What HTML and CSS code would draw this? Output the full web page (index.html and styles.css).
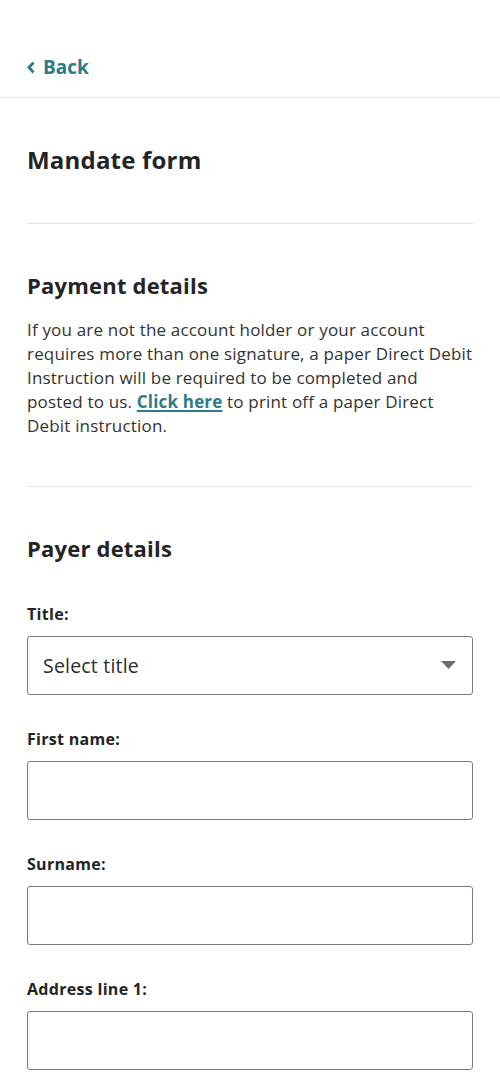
FILE: index.html
```html
<!DOCTYPE html>
<html lang="en">
<head>
<meta charset="utf-8">
<title>Mandate form</title>
<link rel="stylesheet" href="styles.css">
</head>
<body>
<header class="topbar">
  <a class="back" href="#">
    <svg class="back-icon" width="8" height="13" viewBox="0 0 8 13" aria-hidden="true"><path d="M6.5 1.5 L2 6.5 L6.5 11.5" fill="none" stroke="currentColor" stroke-width="2.8" stroke-linecap="butt" stroke-linejoin="miter"/></svg>
    <span>Back</span>
  </a>
</header>
<main class="content">
  <h1 class="page-title">Mandate form</h1>
  <hr class="divider">
  <section class="section">
    <h2 class="section-title">Payment details</h2>
    <p class="intro">If you are not the account holder or your account requires more than one signature, a paper Direct Debit Instruction will be required to be completed and posted to us. <a class="inline-link" href="#">Click here</a> to print off a paper Direct Debit instruction.</p>
  </section>
  <hr class="divider">
  <section class="section">
    <h2 class="section-title">Payer details</h2>
    <form class="form">
      <div class="field">
        <label class="label">Title:</label>
        <div class="select">
          <span class="select-text">Select title</span>
          <svg class="caret" width="15" height="8" viewBox="0 0 15 8" aria-hidden="true"><path d="M0 0 H15 L7.5 8 Z" fill="#6b6b6b"/></svg>
        </div>
      </div>
      <div class="field">
        <label class="label">First name:</label>
        <div class="input"></div>
      </div>
      <div class="field">
        <label class="label">Surname:</label>
        <div class="input"></div>
      </div>
      <div class="field">
        <label class="label">Address line 1:</label>
        <div class="input"></div>
      </div>
    </form>
  </section>
</main>
</body>
</html>
```

FILE: styles.css
```css
* { box-sizing: border-box; }
html, body { margin: 0; padding: 0; background: #fff; }
body {
  font-family: "Open Sans", "Lato", sans-serif;
  color: #2d2d2d;
  overflow: hidden;
}
.topbar {
  padding: 56px 27px 18px;
  border-bottom: 1px solid #e4e4e4;
}
.back {
  display: inline-flex;
  align-items: center;
  gap: 8px;
  color: #2d7a89;
  text-decoration: none;
  font-weight: 700;
  font-size: 19px;
  line-height: 22px;
}
.back-icon { display: block; }
.content { padding: 0 27px; }
.page-title {
  margin: 47px 0 48px;
  font-size: 24px;
  line-height: 30px;
  font-weight: 700;
  color: #242424;
  letter-spacing: 0.2px;
}
.divider {
  margin: 0;
  border: 0;
  border-top: 1px solid #e4e4e4;
}
.section { padding-top: 47px; }
.section-title {
  margin: 0;
  font-size: 22px;
  line-height: 28px;
  font-weight: 700;
  color: #242424;
  letter-spacing: 0.2px;
}
.intro {
  margin: 19px 0 48px;
  font-size: 17px;
  line-height: 24px;
  letter-spacing: 0.18px;
  color: #333;
}
.inline-link {
  color: #2d7a89;
  font-weight: 700;
  text-decoration: underline;
  text-decoration-thickness: 1.5px;
  text-underline-offset: 2px;
}
.form { margin-top: 42px; }
.field { margin-bottom: 34px; }
.label {
  display: block;
  font-size: 16px;
  line-height: 20px;
  font-weight: 700;
  letter-spacing: 0.3px;
  color: #242424;
  margin-bottom: 12px;
}
.select, .input {
  height: 59px;
  border: 1px solid #7a7a7a;
  border-radius: 3px;
  background: #fff;
}
.select {
  display: flex;
  align-items: center;
  justify-content: space-between;
  padding: 0 16px 0 15px;
}
.select-text {
  font-size: 19.5px;
  letter-spacing: 0.2px;
  color: #2d2d2d;
}
.caret { display: block; }
```
